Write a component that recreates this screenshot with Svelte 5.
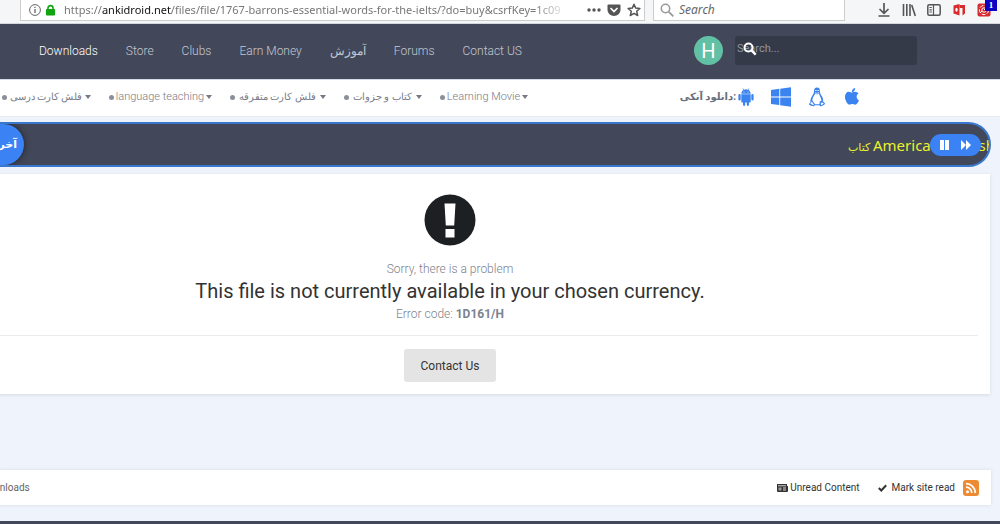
<script>
  const nav = ['Downloads', 'Store', 'Clubs', 'Earn Money', 'آموزش', 'Forums', 'Contact US'];
  const sections = [
    { label: 'فلش کارت درسی', width: 89, persian: true },
    { label: 'language teaching', width: 103 },
    { label: 'فلش کارت متفرقه', width: 96, persian: true },
    { label: 'کتاب و جزوات', width: 78, persian: true },
    { label: 'Learning Movie', width: 88 }
  ];
</script>

<div class="browser">
  <div class="address">
    <svg class="i12" viewBox="0 0 12 12" aria-hidden="true"><circle cx="6" cy="6" r="5.400" fill="none" stroke="#666" /><path d="M6 5v4M6 2.800v1.200" stroke="#666" stroke-width="1.300" /></svg>
    <svg class="lock" viewBox="0 0 12 12" aria-hidden="true"><path d="M3.200 6V4a2.800 2.800 0 0 1 5.600 0v2" fill="none" stroke="#12a512" stroke-width="1.700" /><rect x="1" y="5" width="10" height="7" rx="1" fill="#12a512" /></svg>
    <span class="url">https://<b>ankidroid.net</b>/files/file/1767-barrons-essential-words-for-the-ielts/?do=buy&amp;csrfKey=1c09</span>
    <button class="tool dots" aria-label="Page actions"><svg width="14" height="14" viewBox="0 0 14 14"><g fill="#555"><circle cx="2" cy="7" r="1.700" /><circle cx="7" cy="7" r="1.700" /><circle cx="12" cy="7" r="1.700" /></g></svg></button>
    <button class="tool" aria-label="Save to Pocket"><svg width="14" height="14" viewBox="0 0 14 14"><path d="M1.500 1.500h11q1 0 1 1V7a6.500 6 0 0 1-13 0V2.500q0-1 1-1z" fill="#555" /><path d="M4 5.500l3 3 3-3" fill="none" stroke="#fff" stroke-width="1.700" stroke-linecap="round" /></svg></button>
    <button class="tool" aria-label="Bookmark"><svg width="14" height="14" viewBox="0 0 14 14"><path d="M7 1.200l1.700 3.900 4.200.4-3.200 2.800 1 4.200L7 10.300l-3.700 2.200 1-4.200L1.100 5.500l4.200-.4z" fill="none" stroke="#555" stroke-width="1.500" stroke-linejoin="round" /></svg></button>
  </div>
  <label class="web-search">
    <svg width="14" height="14" viewBox="0 0 14 14" aria-hidden="true"><circle cx="5.500" cy="5.500" r="4.200" fill="none" stroke="#999" stroke-width="1.500" /><path d="M8.800 8.800l4.500 4.500" stroke="#999" stroke-width="1.800" /></svg>
    <input type="text" placeholder="Search" aria-label="Search the web" />
  </label>
  <div class="tools">
    <button class="tool" aria-label="Downloads"><svg width="14" height="14" viewBox="0 0 14 14"><path d="M7 0v10M2.500 6L7 10.300 11.500 6M1.500 13h11" fill="none" stroke="#555" stroke-width="1.700" /></svg></button>
    <button class="tool" aria-label="Library"><svg width="14" height="14" viewBox="0 0 14 14"><path d="M1.500 1v12M4.800 1v12M8 1v12M9.700 2l3.600 11" fill="none" stroke="#555" stroke-width="1.600" /></svg></button>
    <button class="tool" aria-label="Sidebar"><svg width="14" height="14" viewBox="0 0 14 14"><rect x=".8" y="1.800" width="12.400" height="10.400" rx="1.500" fill="none" stroke="#555" stroke-width="1.500" /><path d="M6.500 2v10M2.500 4.500h2.300M2.500 6.800h2.300M2.500 9h2.300" stroke="#555" stroke-width="1.200" /></svg></button>
    <button class="tool" aria-label="Office extension"><svg width="14" height="14" viewBox="0 0 14 14"><path d="M1.500 2.500L7.500 1v11.500l-6-2z" fill="#d92b2b" /><path d="M7.500 2H13v8.500l-2.500 2V5h-3z" fill="#d92b2b" /><ellipse cx="4.500" cy="6.700" rx="1.200" ry="2" fill="#fff" /></svg></button>
    <button class="tool alert" aria-label="Notifications extension"><svg width="14" height="14" viewBox="0 0 14 14"><rect x=".5" y=".5" width="13" height="13" rx="2" fill="#d62b30" /><g fill="none" stroke="#fff"><circle cx="7" cy="7" r="4.600" stroke-dasharray="4 1.500" /><circle cx="7" cy="7" r="2.200" /><path d="M7 7l3-3M3 10l2-2" /></g></svg><span class="count">1</span></button>
  </div>
</div>

<header>
  <nav class="main-nav">
    {#each nav as item, i}<a href="#top" class:active={i === 0}>{item}</a>{/each}
  </nav>
  <button class="avatar" aria-label="Account">H</button>
  <label class="site-search">
    <input type="text" placeholder="Search..." aria-label="Search site" />
    <svg width="14" height="14" viewBox="0 0 14 14" aria-hidden="true"><circle cx="5.500" cy="5.500" r="4" fill="none" stroke="#fff" stroke-width="2" /><path d="M8.700 8.700l4 4" stroke="#fff" stroke-width="2.400" /></svg>
  </label>
</header>

<div class="subnav">
  <nav>
    {#each sections as item}
      <a href="#top" style="width: {item.width}px"><i class="bullet"></i><span class:persian={item.persian}>{item.label}</span><i class="caret"></i></a>
    {/each}
  </nav>
  <div class="get">
    <strong>دانلود آنکی:</strong>
    <a href="#android" aria-label="Android"><svg width="16" height="18" viewBox="0 0 16 18"><g fill="#3b83f0"><path d="M3.300 5.700C3.400 3.800 4.300 2.700 5.500 2L4.600.5l.5-.3.9 1.600a5 5 0 0 1 4 0l.9-1.600.5.3L10.500 2c1.200.7 2.100 1.800 2.200 3.700z" /><path d="M3.300 6.300h9.400v7.200q0 1-1 1H11v2.300q0 1.100-1.100 1.100t-1.100-1.100v-2.300H7.200v2.300q0 1.100-1.100 1.100T5 16.800v-2.300h-.7q-1 0-1-1z" /><rect x=".4" y="6" width="2.300" height="6.500" rx="1.100" /><rect x="13.300" y="6" width="2.300" height="6.500" rx="1.100" /></g><circle cx="6" cy="3.900" r=".5" fill="#fff" /><circle cx="10" cy="3.900" r=".5" fill="#fff" /></svg></a>
    <a href="#windows" aria-label="Windows"><svg width="20" height="20" viewBox="0 0 20 20"><path d="M0 3l8.300-1.200v7.700H0zM9.200 1.700L20 .2v9.300H9.200zM0 10.400h8.300v7.700L0 17zM9.200 10.400H20v9.400L9.200 18.300z" fill="#3b83f0" /></svg></a>
    <a href="#linux" aria-label="Linux"><svg width="18" height="20" viewBox="0 0 18 20"><path d="M9 .6c2.300 0 3 1.700 2.900 3.600-.1 2 .8 3.100 1.900 4.900 1.200 2 1.600 3.500 1.200 5.200l2 2.100c.5.700-3.200 2.800-4.200 2.800-.8 0-1.100-.7-1.500-1H6.900c-.4.400-.9 1-1.700 1-1.200-.1-4.600-1.300-4.200-2.200l1.400-1.700c-.2-2.300.5-4 1.700-6.200C5.300 7.200 6 6 6 4.300 5.900 2 7 .6 9 .6z" fill="#3b83f0" /><path d="M7.300 6.300L9 7.500l2-1.200c.3 2 1.200 3.300 1.900 4.900.5 1.300.6 2.100.4 3l-1.400-.1-.5 3.100H7L4.500 13.700c-.3-1.400.2-2.700.9-4 .7-1.200 1.700-2.200 1.900-3.400z" fill="#fff" /><path d="M2.100 16.300l1.800-1.600 2 3-.8.500zM12.800 15.300l.8.600 1-.4 1.200 1.200-2.800 1.500z" fill="#fff" /><path d="M7.300 4q.5-2 1.200 0M9.500 4q.7-2 1.300 0M7.300 5.500L9 6.400l1.700-1" fill="none" stroke="#fff" stroke-width=".7" /></svg></a>
    <a href="#apple" aria-label="Apple"><svg width="18" height="18" viewBox="0 0 1792 1792"><path fill="#3b83f0" d="M1585 1215q-39 125-123 250-129 196-257 196-49 0-140-32-86-32-151-32-61 0-142 33-81 34-132 34-152 0-301-259-147-261-147-503 0-228 113-374 112-144 284-144 72 0 177 30 104 30 138 30 45 0 143-34 102-34 173-34 119 0 213 65 52 36 104 100-79 67-114 118-65 94-65 207 0 124 69 223t158 126zm-376-1173q0 61-29 136-30 75-93 138-54 54-108 72-37 11-104 17 3-149 78-257 74-107 250-148 1 3 2 11t3 11z" /></svg></a>
  </div>
</div>

<main>
  <section class="ticker">
    <strong class="tag">آخرین</strong>
    <a href="#book">کتاب <span>American English</span></a>
    <div class="controls">
      <button aria-label="Pause"><svg width="10" height="10" viewBox="0 0 10 10"><path d="M0 0h4v10H0zM5 0h4v10H5z" fill="#fff" /></svg></button>
      <button aria-label="Next"><svg width="10" height="10" viewBox="0 0 10 10"><path d="M0 0l5 5V0l5 5-5 5V5l-5 5z" fill="#fff" /></svg></button>
    </div>
  </section>

  <section class="card">
    <svg class="warn" width="52" height="52" viewBox="0 0 52 52" aria-hidden="true"><circle cx="26" cy="26" r="25.500" fill="#1d2023" /><path d="M20.500 9.500h11l-1.300 22h-8.400zM21.500 35h9v8.500h-9z" fill="#fff" /></svg>
    <p>Sorry, there is a problem</p>
    <h1>This file is not currently available in your chosen currency.</h1>
    <p>Error code: <b>1D161/H</b></p>
    <hr />
    <button class="contact">Contact Us</button>
  </section>

  <section class="crumbs">
    <a class="here" href="#downloads">Downloads</a>
    <a href="#unread"><svg width="11" height="8" viewBox="0 0 11 8" aria-hidden="true"><path d="M0 0h10v2h1v5q0 1-1 1H1Q0 8 0 7z" fill="#333" /><path d="M1 1.800h8M6 4h3M6 6h3" fill="none" stroke="#fff" stroke-width=".8" /><path d="M1.500 3.500h3v3h-3z" fill="#999" /></svg>Unread Content</a>
    <a class="mark" href="#read"><svg width="9" height="8" viewBox="0 0 9 8" aria-hidden="true"><path d="M.8 4l2.500 2.500L8.200 1.200" fill="none" stroke="#333" stroke-width="2" /></svg>Mark site read</a>
    <a class="rss" href="#rss" aria-label="RSS"><svg width="16" height="16" viewBox="0 0 16 16"><rect width="16" height="16" rx="3" fill="#ee8a32" /><circle cx="4.500" cy="11.700" r="1.500" fill="#fff" /><path d="M3 7.200a5.800 5.800 0 0 1 5.800 5.800M3 3.700A9.300 9.300 0 0 1 12.300 13" fill="none" stroke="#fff" stroke-width="1.800" /></svg></a>
  </section>
</main>
<footer></footer>

<style>
  :global(body) { background: #eff3fb; font: 12px/16px Roboto, "DejaVu Sans", sans-serif; color: #333; overflow: hidden; }
  * { box-sizing: border-box; }
  a { color: inherit; text-decoration: none; }
  button { border: 0; padding: 0; background: none; font: inherit; color: inherit; display: flex; align-items: center; justify-content: center; }
  input { border: 0; outline: 0; background: none; padding: 0; min-width: 0; width: 100%; font: inherit; color: inherit; }
  svg { display: block; flex: none; }

  .browser { display: flex; height: 24px; align-items: flex-start; padding: 0 9px 0 20px; background: #f5f6f8; border-bottom: 1px solid #d4d7dd; font-family: "Noto Sans", sans-serif; }
  .address { flex: 1; min-width: 0; display: flex; align-items: center; height: 21px; padding: 0 3px 0 8px; background: #fff; border: 1px solid #ccc; border-top: 0; }
  .i12 { width: 12px; height: 12px; }
  .lock { width: 11px; height: 12px; margin: 0 8px 0 4px; }
  .url { flex: 1; min-width: 0; overflow: hidden; white-space: nowrap; font-size: 11px; color: #777; mask-image: linear-gradient(to right, #000 93%, transparent 100%); }
  .url b { font-weight: 400; color: #111; }
  .tool { width: 14px; height: 20px; margin-left: 6px; flex: none; }
  .dots { margin-left: 18px; }
  .web-search { display: flex; align-items: center; gap: 5px; width: 192px; height: 21px; margin-left: 8px; padding: 0 6px; background: #fff; border: 1px solid #ccc; border-top: 0; }
  .web-search input::placeholder { color: #666; font-style: italic; opacity: 1; }
  .tools { display: flex; gap: 5px; margin-left: 26px; }
  .alert { position: relative; }
  .count { position: absolute; right: -6px; top: 0; width: 12px; height: 11px; background: #0c00c4; color: #fff; font: bold 9px/10px "Liberation Serif", serif; }

  header { display: flex; align-items: center; height: 55px; padding: 0 83px 2px 39px; background: #424759; }
  .main-nav { flex: 1; display: flex; gap: 28px; color: #c4c8d2; font-weight: 300; white-space: nowrap; }
  .active { color: #fff; }
  .avatar { width: 29px; height: 29px; border-radius: 50%; background: #62c1a5; color: #fff; font-size: 20px; }
  .site-search { position: relative; display: flex; width: 182px; height: 29px; margin-left: 12px; padding: 0 2px 4px; border-radius: 3px; background: #353a49; font-size: 11px; }
  .site-search input::placeholder { color: #9095a3; opacity: 1; }
  .site-search svg { position: absolute; left: 8px; top: 6px; }

  .subnav { display: flex; justify-content: space-between; height: 38px; padding: 0 139px 2px 2px; align-items: center; background: #fff; border-top: 1px solid #d5dbe6; border-bottom: 1px solid #e6eaf1; }
  .subnav nav { display: flex; gap: 18px; font-size: 11px; color: #8a8d99; }
  .subnav nav a { display: flex; align-items: center; justify-content: space-between; white-space: nowrap; }
  .subnav nav a span { font-weight: 300; color: #777a86; }
  .subnav nav a .persian { font-size: 10px; }
  .bullet { flex: none; width: 5px; height: 5px; border-radius: 50%; background: #8b8e9b; }
  .caret { flex: none; border: 3px solid transparent; border-top: 4px solid #777a86; border-bottom: 0; }
  .get { display: flex; align-items: center; }
  .get strong { direction: ltr; font-size: 10px; color: #68707c; margin-right: 2px; }
  .get a + a { margin-left: 17px; }

  main { padding: 5px 9px 0 0; }
  .ticker { position: relative; display: flex; justify-content: flex-end; align-items: center; height: 45px; margin-left: -40px; border: 2px solid #3978cc; border-radius: 23px; background: #424759; overflow: hidden; }
  .tag { position: absolute; left: 0; top: 0; width: 62px; height: 41px; padding-right: 7px; line-height: 41px; direction: rtl; font-size: 11px; color: #fff; background: #3b83f5; border-radius: 0 22px 22px 0; box-shadow: 0 0 6px #222; }
  .ticker a { width: 141px; color: #eaf22d; white-space: nowrap; font-size: 11px; line-height: 22px; margin-top: 3px; }
  .ticker a span { font-family: "Noto Sans", sans-serif; font-size: 15px; }
  .controls { position: absolute; right: 8px; top: 10px; display: flex; gap: 11px; height: 22px; padding: 0 10px; border-radius: 11px; background: #3b83f5; }

  .card { display: flex; flex-direction: column; align-items: center; margin: 7px 1px 0 -90px; padding: 20px 12px 12px; background: #fff; box-shadow: 0 1px 3px #d5dbe6; }
  .card p { margin: 0; color: #7d838e; font-weight: 300; }
  .card p b { font-weight: 700; }
  .warn { margin-bottom: 15px; }
  h1 { margin: 0; font-size: 20px; line-height: 29px; font-weight: 400; color: #333; }
  hr { width: 100%; margin: 13px 0; border: 0; border-top: 1px solid #e9ebee; }
  .contact { width: 92px; height: 33px; border-radius: 3px; background: #e4e4e4; color: #333; }

  .crumbs { display: flex; align-items: center; height: 35px; margin-top: 76px; padding-right: 12px; background: #fff; box-shadow: 0 0 3px #d5dbe6; font-size: 10px; }
  .crumbs a { display: flex; align-items: center; gap: 2px; }
  .here { margin: 0 auto 0 -20px; color: #666; }
  .crumbs .mark { margin-left: 18px; gap: 5px; }
  .rss { margin-left: 8px; }
  footer { height: 3px; margin-top: 16px; background: #424759; }
</style>
